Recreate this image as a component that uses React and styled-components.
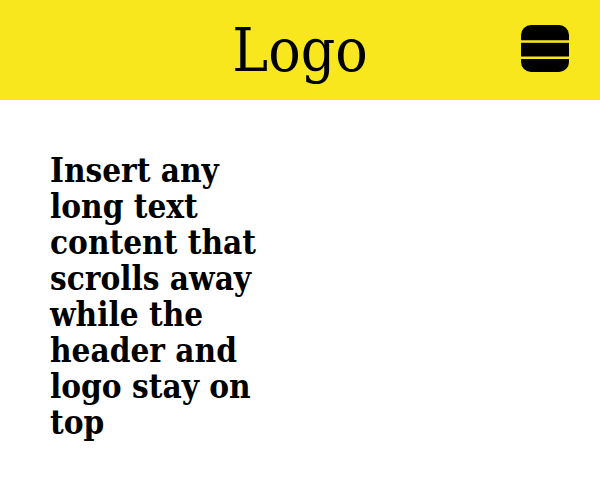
import React from 'react';
import styled, { createGlobalStyle } from 'styled-components';

const GlobalStyle = createGlobalStyle`
  html, body {
    margin: 0;
    padding: 0;
    background: #ffffff;
  }
  body {
    font-family: "Roboto Slab", "DejaVu Serif Condensed", "DejaVu Serif", serif;
    color: #000;
  }
`;

const Header = styled.header`
  height: 100px;
  background: #f8e71c;
  display: flex;
  align-items: center;
  justify-content: center;
  position: relative;
`;

const Logo = styled.h1`
  margin: 0;
  font-size: 60px;
  font-weight: 400;
  line-height: 1;
`;

const MenuButton = styled.button`
  position: absolute;
  right: 31px;
  top: 25px;
  width: 48px;
  height: 47px;
  padding: 0;
  border: 0;
  background: transparent;
  cursor: pointer;
  display: block;
`;

const Content = styled.main`
  padding: 53px 50px 50px;
`;

const Text = styled.p`
  margin: 0;
  max-width: 230px;
  font-size: 33px;
  line-height: 36px;
  font-weight: 700;
`;

const BurgerIcon = () => (
  <svg width="48" height="47" viewBox="0 0 48 47">
    <path d="M0 15.3 V10 A10 10 0 0 1 10 0 H38 A10 10 0 0 1 48 10 V15.3 Z" fill="#000" />
    <rect x="0" y="17.8" width="48" height="13.7" fill="#000" />
    <path d="M0 34 H48 V37 A10 10 0 0 1 38 47 H10 A10 10 0 0 1 0 37 Z" fill="#000" />
  </svg>
);

const App = () => (
  <>
    <GlobalStyle />
    <Header>
      <Logo>Logo</Logo>
      <MenuButton aria-label="Menu">
        <BurgerIcon />
      </MenuButton>
    </Header>
    <Content>
      <Text>
        Insert any long text content that scrolls away while the header and logo stay on top
      </Text>
    </Content>
  </>
);

export default App;
